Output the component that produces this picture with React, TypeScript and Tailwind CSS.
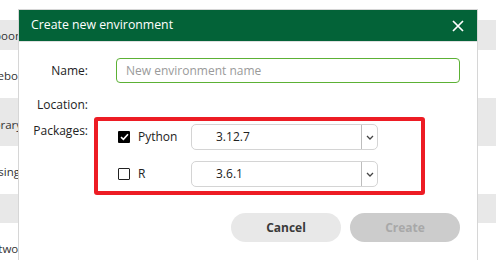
import React from "react";

const font = { fontFamily: '"Open Sans", "Noto Sans", sans-serif' };

function BgRow({ h, gray, text, offset = 0, right = 21 }: { h: string; gray?: boolean; text?: string; offset?: number; right?: number }) {
  return (
    <div className={`${h} ${gray ? "bg-[#e8e8e8]" : "bg-white"} flex items-center`}>
      {text ? (
        <div className="flex justify-end whitespace-nowrap text-[11.5px] text-[#333]" style={{ marginTop: offset, width: right }}>
          {text}
        </div>
      ) : null}
    </div>
  );
}

function Chevron() {
  return (
    <svg width="8" height="5" viewBox="0 0 8 5" fill="none">
      <path d="M1 1 L4 4 L7 1" stroke="#444" strokeWidth="1.3" />
    </svg>
  );
}

function Select({ value }: { value: string }) {
  return (
    <div className="w-[187px] h-[26px] border border-[#d4d4d4] rounded-[5px] flex items-center">
      <div className="flex-1 pl-[24px] text-[12px] text-[#222]">{value}</div>
      <div className="w-[16px] h-full border-l border-[#bdbdbd] flex items-center justify-center">
        <Chevron />
      </div>
    </div>
  );
}

function PackageRow({ label, checked, value }: { label: string; checked?: boolean; value: string }) {
  return (
    <div className="flex items-center h-[26px]">
      <div className="w-[75px] flex items-center pl-[2px]">
        {checked ? (
          <div className="w-[12px] h-[12px] bg-black rounded-[1px] flex items-center justify-center">
            <svg width="9" height="8" viewBox="0 0 9 8" fill="none">
              <path d="M1 4.2 L3.4 6.4 L8 1.2" stroke="white" strokeWidth="1.6" />
            </svg>
          </div>
        ) : (
          <div className="w-[12px] h-[12px] border-[1.5px] border-[#222] rounded-[1px]" />
        )}
        <span className="ml-[8px] text-[12px] text-[#222]">{label}</span>
      </div>
      <Select value={value} />
    </div>
  );
}

export default function App() {
  return (
    <div className="w-[496px] h-[260px] relative overflow-hidden bg-white" style={font}>
      {/* background list */}
      <div className="flex flex-col">
        <div className="h-[20px] bg-white overflow-hidden">
          <div className="text-[12px] text-[#333] leading-[16px] mt-[-12px] whitespace-nowrap">
            ment of Checkout toolbar
          </div>
        </div>
        <BgRow h="h-[30px]" gray text="Teaspoon" offset={1} right={22} />
        <BgRow h="h-[48px]" text="Notebook" offset={4} right={31} />
        <BgRow h="h-[48px]" gray text="Library" offset={6} right={22} />
        <BgRow h="h-[48px]" text="Processing" offset={4} right={20} />
        <BgRow h="h-[29px]" gray />
        <BgRow h="h-[37px]" text="Network" offset={14} right={29} />
      </div>

      {/* dialog */}
      <div className="absolute left-[18px] top-[9px] w-[460px] h-[260px] border border-[#d6d6d6] bg-white flex flex-col">
        <div className="h-[32px] bg-[#036338] border-b border-[#e0e0e0] flex items-center justify-between pl-[12px] pr-[13px]">
          <span className="text-[12.3px] text-white">Create new environment</span>
          <svg width="12" height="12" viewBox="0 0 12 12" fill="none">
            <path d="M1 1 L11 11 M11 1 L1 11" stroke="white" strokeWidth="1.7" />
          </svg>
        </div>

        <div className="flex flex-col pr-[17px]">
          {/* Name */}
          <div className="flex items-center mt-[16px] gap-[28px]">
            <div className="w-[69px] text-right text-[12px] text-[#222]">Name:</div>
            <div className="flex-1 h-[25px] border border-[#5cb135] rounded-[4px] flex items-center pl-[9px] text-[12px] text-[#9a9a9a]">
              New environment name
            </div>
          </div>
          {/* Location */}
          <div className="flex items-center mt-[12px] h-[20px] gap-[28px]">
            <div className="w-[69px] text-right text-[12px] text-[#222]">Location:</div>
          </div>
          {/* Packages */}
          <div className="flex mt-[9px] gap-[28px]">
            <div className="w-[69px] text-right text-[12px] text-[#222] leading-[16px] mt-[-1px]">Packages:</div>
            <div className="flex flex-col gap-[11px]">
              <PackageRow label="Python" checked value="3.12.7" />
              <PackageRow label="R" value="3.6.1" />
            </div>
          </div>
          {/* Buttons */}
          <div className="flex justify-end gap-[9px] mt-[26px]">
            <button className="w-[110px] h-[29px] rounded-full bg-[#e8e8e8] text-[12px] font-bold text-[#3a3a3a]">
              Cancel
            </button>
            <button className="w-[110px] h-[29px] rounded-full bg-[#cccccc] text-[12px] font-bold text-[#a8a8a8]">
              Create
            </button>
          </div>
        </div>
      </div>

      {/* red annotation box */}
      <div className="absolute left-[94px] top-[117px] w-[331px] h-[78px] border-[4px] border-[#ed1c24] rounded-[3px]" />
    </div>
  );
}
